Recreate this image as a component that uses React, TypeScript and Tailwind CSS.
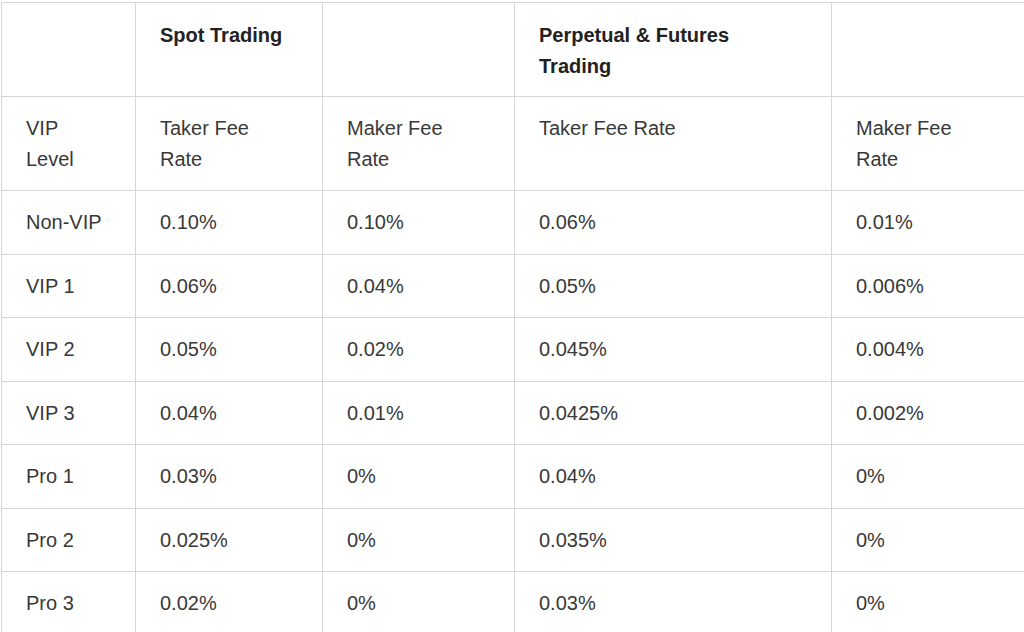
import React from 'react';

const rows: string[][] = [
  ['Non-VIP', '0.10%', '0.10%', '0.06%', '0.01%'],
  ['VIP 1', '0.06%', '0.04%', '0.05%', '0.006%'],
  ['VIP 2', '0.05%', '0.02%', '0.045%', '0.004%'],
  ['VIP 3', '0.04%', '0.01%', '0.0425%', '0.002%'],
  ['Pro 1', '0.03%', '0%', '0.04%', '0%'],
  ['Pro 2', '0.025%', '0%', '0.035%', '0%'],
  ['Pro 3', '0.02%', '0%', '0.03%', '0%'],
];

const cell = 'border border-[#d6d6d6] pl-6 pr-8 pt-4 pb-4 align-top text-left';
const head = 'border border-[#d6d6d6] pl-6 pr-8 pt-[17px] pb-[15px] align-top text-left font-bold text-[#222]';

export default function App() {
  return (
    <div className="min-h-screen bg-white pt-[2px] pl-[1px] overflow-hidden font-['Liberation_Sans',Arial,sans-serif] text-[20px] leading-[30.5px] text-[#383838]">
      <table className="table-fixed border-collapse w-[1030px]">
        <colgroup>
          <col className="w-[134px]" />
          <col className="w-[187px]" />
          <col className="w-[192px]" />
          <col className="w-[317px]" />
          <col className="w-[200px]" />
        </colgroup>
        <thead>
          <tr>
            <th className={head}></th>
            <th className={head}>Spot Trading</th>
            <th className={head}></th>
            <th className={head}>Perpetual &amp; Futures Trading</th>
            <th className={head}></th>
          </tr>
        </thead>
        <tbody>
          <tr>
            <td className={cell}>VIP Level</td>
            <td className={cell}>Taker Fee Rate</td>
            <td className={cell}>Maker Fee Rate</td>
            <td className={cell}>Taker Fee Rate</td>
            <td className={`${cell} pr-[40px]`}>Maker Fee Rate</td>
          </tr>
          {rows.map((r) => (
            <tr key={r[0]}>
              {r.map((v, i) => (
                <td key={i} className={cell}>{v}</td>
              ))}
            </tr>
          ))}
        </tbody>
      </table>
    </div>
  );
}
